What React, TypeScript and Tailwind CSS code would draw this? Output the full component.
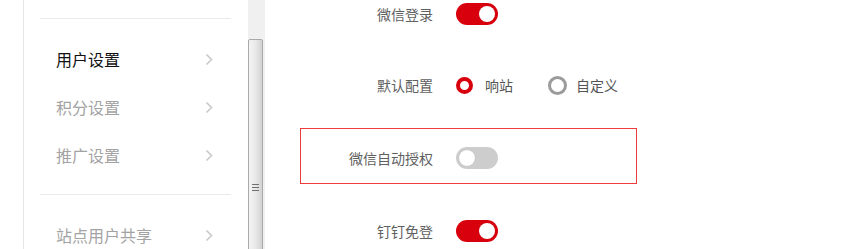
import React from "react";

const font = { fontFamily: '"Noto Sans CJK SC", "Noto Sans", sans-serif' };

function Chevron() {
  return (
    <svg width="8" height="13" viewBox="0 0 8 13" className="shrink-0">
      <polyline points="1.5,1.5 6.5,6.5 1.5,11.5" fill="none" stroke="#c9c9c9" strokeWidth="1.6" />
    </svg>
  );
}

function NavItem({ label, active }: { label: string; active?: boolean }) {
  return (
    <div className="flex h-[48px] items-center justify-between pl-[16px] pr-[18px]">
      <span className={`text-[16px] leading-none ${active ? "text-[#111]" : "text-[#a3a3a3]"}`}>{label}</span>
      <Chevron />
    </div>
  );
}

function Toggle({ on }: { on: boolean }) {
  return (
    <div
      className={`flex h-[22px] w-[42px] items-center rounded-full px-[3px] ${
        on ? "justify-end bg-[#d9000d]" : "justify-start bg-[#cdcdcd]"
      }`}
    >
      <div className="h-[16px] w-[16px] rounded-full bg-white shadow-[0_0_1px_rgba(0,0,0,0.2)]" />
    </div>
  );
}

function Label({ children }: { children: React.ReactNode }) {
  return <div className="w-[133px] shrink-0 text-right text-[14px] leading-none text-[#606060]">{children}</div>;
}

export default function App() {
  return (
    <div className="flex h-[249px] w-[849px] overflow-hidden bg-white" style={font}>
      <div className="w-[23px] shrink-0" />
      <div className="flex w-[225px] shrink-0 flex-col border-l border-[#e6e6e6] pl-[16px] pr-[17px]">
        <div className="h-[19px] shrink-0 border-b border-[#ebebeb]" />
        <div className="shrink-0 border-b border-[#ebebeb] pb-[15px] pt-[16px]">
          <NavItem label="用户设置" active />
          <NavItem label="积分设置" />
          <NavItem label="推广设置" />
        </div>
        <div className="pt-[16px]">
          <NavItem label="站点用户共享" />
        </div>
      </div>
      <div className="flex w-[17px] shrink-0 flex-col bg-[#f0f0f0]">
        <div className="h-[39px] shrink-0" />
        <div className="ml-0 h-[260px] w-[15px] shrink-0 rounded-t-[2px] border border-[#a9a9a9] bg-[linear-gradient(to_right,#f4f4f4,#e9e9e9_50%,#d2d2d2)] pt-[144px]">
          <div className="ml-[3px] flex w-[7px] flex-col gap-[2px]">
            <div className="h-px bg-[#6f6f6f]" />
            <div className="h-px bg-[#6f6f6f]" />
            <div className="h-px bg-[#6f6f6f]" />
          </div>
        </div>
      </div>
      <div className="flex flex-1 flex-col pl-[35px]">
        <div className="flex h-[28px] shrink-0 items-center gap-[23px]">
          <Label>微信登录</Label>
          <Toggle on />
        </div>
        <div className="mt-[43px] flex h-[28px] shrink-0 items-center gap-[23px]">
          <Label>默认配置</Label>
          <div className="flex items-center text-[14px] leading-none text-[#555]">
            <div className="h-[17px] w-[17px] rounded-full border-[4.5px] border-[#d9000d] bg-white" />
            <span className="ml-[12px]">响站</span>
            <div className="ml-[35px] h-[19px] w-[19px] rounded-full border-[3px] border-[#9b9b9b] bg-white" />
            <span className="ml-[9px]">自定义</span>
          </div>
        </div>
        <div className="mt-[29px] flex h-[56px] w-[337px] shrink-0 items-start border border-[#ee3b3b] pt-[18px]">
          <div className="flex h-[22px] items-center gap-[23px]">
            <div className="w-[132px] shrink-0 text-right text-[14px] leading-none text-[#606060]">微信自动授权</div>
            <Toggle on={false} />
          </div>
        </div>
        <div className="mt-[33px] flex h-[28px] shrink-0 items-center gap-[23px]">
          <Label>钉钉免登</Label>
          <Toggle on />
        </div>
      </div>
    </div>
  );
}
